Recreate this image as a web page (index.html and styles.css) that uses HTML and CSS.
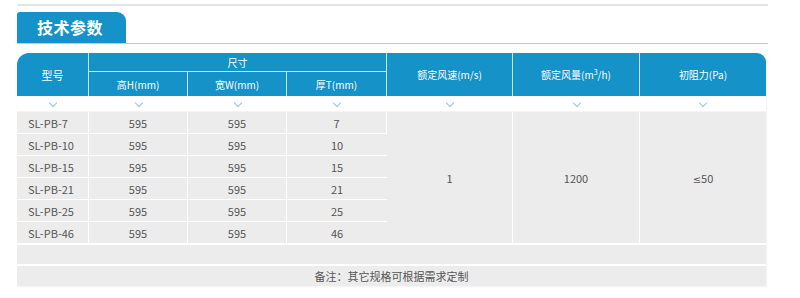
FILE: index.html
```html
<!DOCTYPE html>
<html lang="zh">
<head>
<meta charset="utf-8">
<link rel="stylesheet" href="styles.css">
</head>
<body>
<div class="page">
  <div class="top-line"></div>
  <div class="tab-bar">
    <div class="tab">技术参数</div>
  </div>
  <table class="spec">
    <colgroup>
      <col class="c1"><col class="c2"><col class="c2"><col class="c3"><col class="c4"><col class="c5"><col class="c4">
    </colgroup>
    <thead>
      <tr class="h1">
        <th rowspan="2" class="tl">型号</th>
        <th colspan="3">尺寸</th>
        <th rowspan="2">额定风速(m/s)</th>
        <th rowspan="2">额定风量(m<sup>3</sup>/h)</th>
        <th rowspan="2" class="tr">初阻力(Pa)</th>
      </tr>
      <tr class="h2">
        <th>高H(mm)</th>
        <th>宽W(mm)</th>
        <th>厚T(mm)</th>
      </tr>
      <tr class="arrows">
        <td><span class="chev"></span></td>
        <td><span class="chev"></span></td>
        <td><span class="chev"></span></td>
        <td><span class="chev"></span></td>
        <td><span class="chev"></span></td>
        <td><span class="chev"></span></td>
        <td><span class="chev"></span></td>
      </tr>
    </thead>
    <tbody>
      <tr><td class="model">SL-PB-7</td><td>595</td><td>595</td><td>7</td><td rowspan="6">1</td><td rowspan="6">1200</td><td rowspan="6"><span class="le">≤</span>50</td></tr>
      <tr><td class="model">SL-PB-10</td><td>595</td><td>595</td><td>10</td></tr>
      <tr><td class="model">SL-PB-15</td><td>595</td><td>595</td><td>15</td></tr>
      <tr><td class="model">SL-PB-21</td><td>595</td><td>595</td><td>21</td></tr>
      <tr><td class="model">SL-PB-25</td><td>595</td><td>595</td><td>25</td></tr>
      <tr><td class="model">SL-PB-46</td><td>595</td><td>595</td><td>46</td></tr>
      <tr class="empty"><td colspan="7"></td></tr>
      <tr class="note"><td colspan="7">备注：其它规格可根据需求定制</td></tr>
    </tbody>
  </table>
</div>
</body>
</html>
```
FILE: styles.css
```css
* { box-sizing: border-box; }
html, body { margin: 0; padding: 0; background: #fff; }
body {
  font-family: "Noto Sans CJK SC", "Noto Sans", sans-serif;
  color: #555;
}
.page {
  width: 800px;
  height: 298px;
  padding: 4px 32px 0 17px;
  overflow: hidden;
}
.top-line {
  height: 2px;
  background: #e4e4e4;
}
.tab-bar {
  margin-top: 6px;
  height: 32px;
  border-bottom: 1px solid #c8c8c8;
  display: flex;
  align-items: flex-end;
}
.tab {
  width: 109px;
  height: 31px;
  background: #1592c8;
  border-radius: 3px 9px 0 0;
  color: #fff;
  font-weight: bold;
  font-size: 16px;
  line-height: 31px;
  padding-left: 20px;
  letter-spacing: 0.5px;
}
.spec {
  margin-top: 9px;
  width: 749px;
  border-collapse: separate;
  border-spacing: 0;
  table-layout: fixed;
  font-size: 11px;
  box-shadow: 1px 1px 2px rgba(0,0,0,0.06);
}
col.c1 { width: 72px; }
col.c2 { width: 99px; }
col.c3 { width: 100px; }
col.c4 { width: 126px; }
col.c5 { width: 127px; }
.spec th {
  background: #1592c8;
  color: #fff;
  font-weight: normal;
  font-size: 10px;
  padding: 0;
  border-right: 1px solid rgba(255,255,255,0.75);
}
.spec th:last-child { border-right: none; }
.spec th.tl { border-top-left-radius: 12px; font-size: 11px; }
.spec th.tr { border-top-right-radius: 9px; border-right: none; }
.spec th sup { font-size: 7px; vertical-align: 4px; line-height: 0; }
.h1 th { height: 19px; }
.h1 th[colspan] { border-bottom: 1px solid rgba(255,255,255,0.75); }
.h2 th { height: 24px; }
.h2 th:last-child { border-right: 1px solid rgba(255,255,255,0.75); }
.arrows td {
  height: 15px;
  background: #fff;
  padding: 0;
  text-align: center;
  line-height: 0;
}
.chev {
  display: inline-block;
  width: 6px;
  height: 6px;
  border-right: 1.5px solid #8ec5e2;
  border-bottom: 1.5px solid #8ec5e2;
  transform: rotate(45deg);
  margin-top: -10px;
}
.spec tbody td {
  background: #ececec;
  text-align: center;
  height: 22px;
  padding: 0;
  border-top: 1px solid #fff;
  border-right: 1px solid #fff;
  color: #555;
}
.spec tbody td:last-child { border-right: none; }
.spec tbody tr:first-child td { border-top: 1px solid #f4f4f4; }
.spec tbody td.model { text-align: left; padding-left: 11px; }
.spec tbody tr.empty td { height: 21px; border-top: 2px solid #fff; }
.spec tbody tr.note td { height: 22px; border-top: 2px solid #fff; }
.le { font-family: "DejaVu Sans", sans-serif; font-size: 10px; }
```
